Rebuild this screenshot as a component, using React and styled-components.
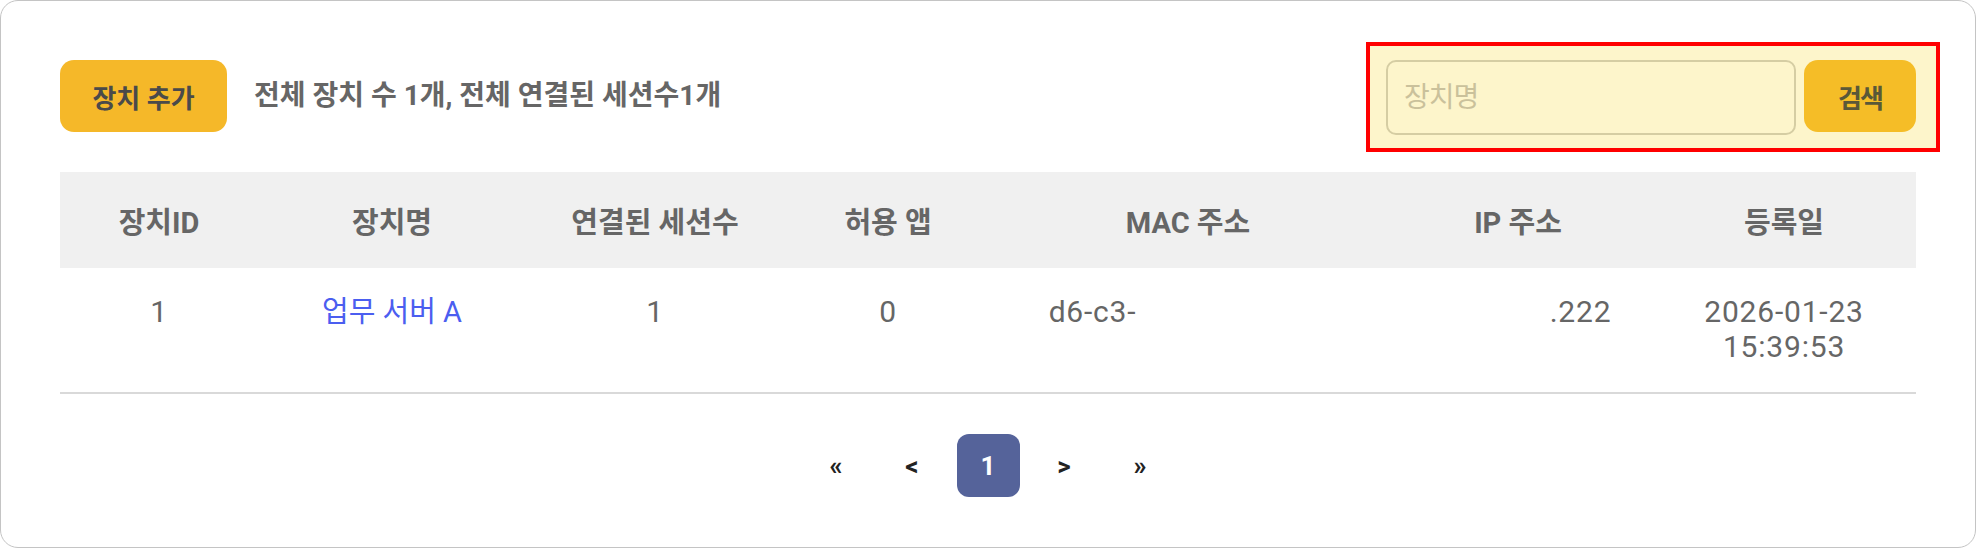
import React from "react";
import styled, { createGlobalStyle } from "styled-components";

const GlobalStyle = createGlobalStyle`
  * {
    box-sizing: border-box;
  }
  body {
    margin: 0;
    background: #ffffff;
    font-family: Roboto, "Noto Sans CJK KR", sans-serif;
  }
`;

const columns = "198px 268px 258px 208px 392px 268px 1fr";

const devices = [
  {
    id: 1,
    name: "업무 서버 A",
    sessions: 1,
    apps: 0,
    mac: "d6-c3-",
    ip: ".222",
    date: "2026-01-23",
    time: "15:39:53",
  },
];

const Devices = () => {
  return (
    <Card>
      <Toolbar>
        <ToolbarLeft>
          <ActionButton>장치 추가</ActionButton>
          <Summary>전체 장치 수 1개, 전체 연결된 세션수1개</Summary>
        </ToolbarLeft>
        <SearchForm onSubmit={(e) => e.preventDefault()}>
          <Highlight />
          <SearchInput placeholder="장치명" />
          <SearchButton type="submit">검색</SearchButton>
        </SearchForm>
      </Toolbar>

      <Table>
        <HeadRow>
          <HeadCell>장치ID</HeadCell>
          <HeadCell>장치명</HeadCell>
          <HeadCell>연결된 세션수</HeadCell>
          <HeadCell>허용 앱</HeadCell>
          <HeadCell>MAC 주소</HeadCell>
          <HeadCell>IP 주소</HeadCell>
          <HeadCell>등록일</HeadCell>
        </HeadRow>
        {devices.map((d) => (
          <BodyRow key={d.id}>
            <Cell>{d.id}</Cell>
            <Cell>
              <NameLink href="#">{d.name}</NameLink>
            </Cell>
            <Cell>{d.sessions}</Cell>
            <Cell>{d.apps}</Cell>
            <Cell>
              {d.mac}
              <Masked $w={191} />
            </Cell>
            <Cell>
              <Masked $w={125} />
              {d.ip}
            </Cell>
            <Cell>
              {d.date}
              <br />
              {d.time}
            </Cell>
          </BodyRow>
        ))}
      </Table>

      <Pager>
        <PageArrow>«</PageArrow>
        <PageArrow>&lt;</PageArrow>
        <PageNumber $active>1</PageNumber>
        <PageArrow>&gt;</PageArrow>
        <PageArrow>»</PageArrow>
      </Pager>
    </Card>
  );
};

const Card = styled.div`
  width: 1976px;
  height: 548px;
  border: 1px solid #c4c4c4;
  border-radius: 18px;
  padding: 59px 59px 0;
  background: #ffffff;
`;

const Toolbar = styled.div`
  display: flex;
  justify-content: space-between;
  align-items: flex-start;
`;

const ToolbarLeft = styled.div`
  display: flex;
  align-items: center;
  gap: 27px;
`;

const ActionButton = styled.button`
  width: 167px;
  height: 72px;
  border: none;
  border-radius: 14px;
  background: #f5b829;
  color: #4a4a4a;
  font-family: Roboto, "Noto Sans CJK KR", sans-serif;
  font-size: 26px;
  font-weight: 700;
  cursor: pointer;
`;

const Summary = styled.span`
  font-size: 28px;
  font-weight: 700;
  color: #666666;
  line-height: 72px;
`;

const SearchForm = styled.form`
  position: relative;
  display: flex;
  align-items: flex-start;
  gap: 8px;
  margin: 0;
`;

const Highlight = styled.div`
  position: absolute;
  top: -18px;
  left: -20px;
  right: -24px;
  bottom: -17px;
  border: 4px solid #ff0000;
  background: #fdf5cb;
`;

const SearchInput = styled.input`
  position: relative;
  width: 410px;
  height: 75px;
  padding: 0 16px;
  border: 2px solid #d5cda3;
  border-radius: 10px;
  background: transparent;
  font-family: Roboto, "Noto Sans CJK KR", sans-serif;
  font-size: 28px;
  letter-spacing: -1px;
  color: #444444;
  outline: none;

  &::placeholder {
    color: #cac19b;
  }
`;

const SearchButton = styled.button`
  position: relative;
  width: 112px;
  height: 72px;
  border: none;
  border-radius: 14px;
  background: #f5bd27;
  color: #5a5838;
  font-family: Roboto, "Noto Sans CJK KR", sans-serif;
  font-size: 26px;
  font-weight: 700;
  letter-spacing: -2px;
  cursor: pointer;
`;

const Table = styled.div`
  margin-top: 37px;
`;

const HeadRow = styled.div`
  display: grid;
  grid-template-columns: ${columns};
  align-items: center;
  height: 96px;
  background: #f0f0f0;
`;

const HeadCell = styled.div`
  text-align: center;
  font-size: 29px;
  font-weight: 700;
  color: #666666;
`;

const BodyRow = styled.div`
  display: grid;
  grid-template-columns: ${columns};
  align-items: start;
  padding: 26px 0 28px;
  border-bottom: 2px solid #d9d9d9;
`;

const Cell = styled.div`
  text-align: center;
  font-size: 30px;
  line-height: 35px;
  letter-spacing: 0.8px;
  color: #666666;
  white-space: nowrap;
`;

const NameLink = styled.a`
  font-size: 29px;
  letter-spacing: 0;
  color: #4b5ef0;
  text-decoration: none;
`;

const Masked = styled.span`
  display: inline-block;
  width: ${(p) => p.$w}px;
`;

const Pager = styled.div`
  display: flex;
  justify-content: center;
  gap: 13px;
  margin-top: 40px;
`;

const PageArrow = styled.button`
  width: 63px;
  height: 63px;
  border: none;
  border-radius: 12px;
  background: transparent;
  color: #222222;
  font-family: Roboto, sans-serif;
  font-size: 26px;
  font-weight: 700;
  cursor: pointer;
`;

const PageNumber = styled(PageArrow)`
  background: ${(p) => (p.$active ? "#55639a" : "transparent")};
  color: ${(p) => (p.$active ? "#ffffff" : "#222222")};
`;

export default function App() {
  return (
    <>
      <GlobalStyle />
      <Devices />
    </>
  );
}
